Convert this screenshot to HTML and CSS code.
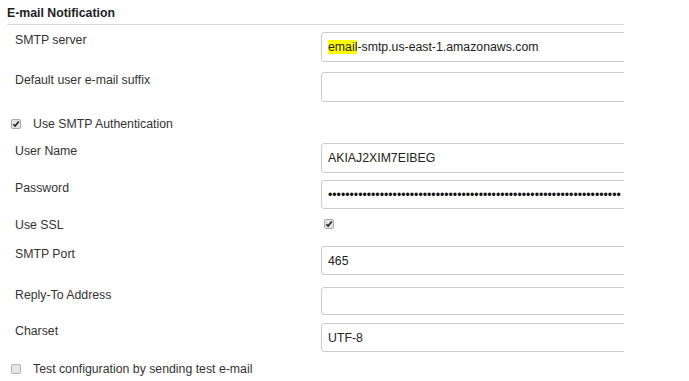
FILE: index.html
```html
<!DOCTYPE html>
<html>
<head>
<meta charset="utf-8">
<link rel="stylesheet" href="styles.css">
</head>
<body>
<div class="panel">
  <div class="title">E-mail Notification</div>

  <div class="row r-smtp">
    <div class="label">SMTP server</div>
    <div class="field h30"><span class="hl">email</span>-smtp.us-east-1.amazonaws.com</div>
  </div>

  <div class="row r-suffix">
    <div class="label">Default user e-mail suffix</div>
    <div class="field h30"></div>
  </div>

  <div class="check-row r-auth">
    <svg class="cb" width="10" height="10" viewBox="0 0 10 10"><rect x="0.5" y="0.5" width="9" height="9" rx="1.5" fill="#e4e4e4" stroke="#a9a9a9"/><path d="M2.3 5.2 L4.1 7 L7.8 2.6" fill="none" stroke="#222" stroke-width="1.6"/></svg>
    <span>Use SMTP Authentication</span>
  </div>

  <div class="row r-user">
    <div class="label">User Name</div>
    <div class="field h30">AKIAJ2XIM7EIBEG</div>
  </div>

  <div class="row r-pass">
    <div class="label">Password</div>
    <div class="field h29 dots">••••••••••••••••••••••••••••••••••••••••••••••••••••••••••••••••••••</div>
  </div>

  <div class="row r-ssl">
    <div class="label">Use SSL</div>
    <div class="ssl-box">
      <svg class="cb" width="10" height="10" viewBox="0 0 10 10"><rect x="0.5" y="0.5" width="9" height="9" rx="1.5" fill="#e4e4e4" stroke="#a9a9a9"/><path d="M2.3 5.2 L4.1 7 L7.8 2.6" fill="none" stroke="#222" stroke-width="1.6"/></svg>
    </div>
  </div>

  <div class="row r-port">
    <div class="label">SMTP Port</div>
    <div class="field h29">465</div>
  </div>

  <div class="row r-reply">
    <div class="label">Reply-To Address</div>
    <div class="field h28"></div>
  </div>

  <div class="row r-charset">
    <div class="label">Charset</div>
    <div class="field h29">UTF-8</div>
  </div>

  <div class="check-row r-test">
    <svg class="cb" width="10" height="10" viewBox="0 0 10 10"><rect x="0.5" y="0.5" width="9" height="9" rx="1.5" fill="#e6e6e6" stroke="#b3b3b3"/></svg>
    <span>Test configuration by sending test e-mail</span>
  </div>
</div>
</body>
</html>
```
FILE: styles.css
```css
html, body {
  margin: 0;
  padding: 0;
  background: #fff;
}
body {
  font-family: "Liberation Sans", Arial, sans-serif;
  font-size: 12.3px;
  line-height: 14px;
  color: #333;
}
.panel {
  width: 617px;
  margin-left: 7px;
  overflow: hidden;
}
.title {
  font-weight: bold;
  color: #222;
  padding-top: 6px;
  padding-bottom: 4px;
  border-bottom: 1px solid #dcdcdc;
}
.row {
  display: grid;
  grid-template-columns: 314px 420px;
  align-items: start;
}
.label {
  padding-left: 8px;
  padding-top: 1px;
}
.field {
  box-sizing: border-box;
  border: 1px solid #cbcbcb;
  border-radius: 3px;
  padding: 0 6px;
  display: flex;
  align-items: center;
  white-space: nowrap;
  overflow: hidden;
  color: #222;
  background: #fff;
}
.h30 { height: 30px; }
.h29 { height: 29px; }
.h28 { height: 28px; }
.hl { background: #ffff00; }
.dots { letter-spacing: 0; color: #111; }
.check-row {
  display: flex;
  align-items: center;
  height: 14px;
  padding-left: 4px;
  gap: 12px;
}
.cb { display: block; flex: none; }
.ssl-box {
  padding-left: 3px;
  padding-top: 2px;
}
.r-smtp { margin-top: 7px; }
.r-suffix { margin-top: 10px; }
.r-auth { margin-top: 15px; }
.r-user { margin-top: 12px; }
.r-pass { margin-top: 7px; }
.r-ssl { margin-top: 8px; height: 14px; }
.r-port { margin-top: 15px; }
.r-reply { margin-top: 12px; }
.r-charset { margin-top: 8px; }
.r-test { margin-top: 10px; }
```
